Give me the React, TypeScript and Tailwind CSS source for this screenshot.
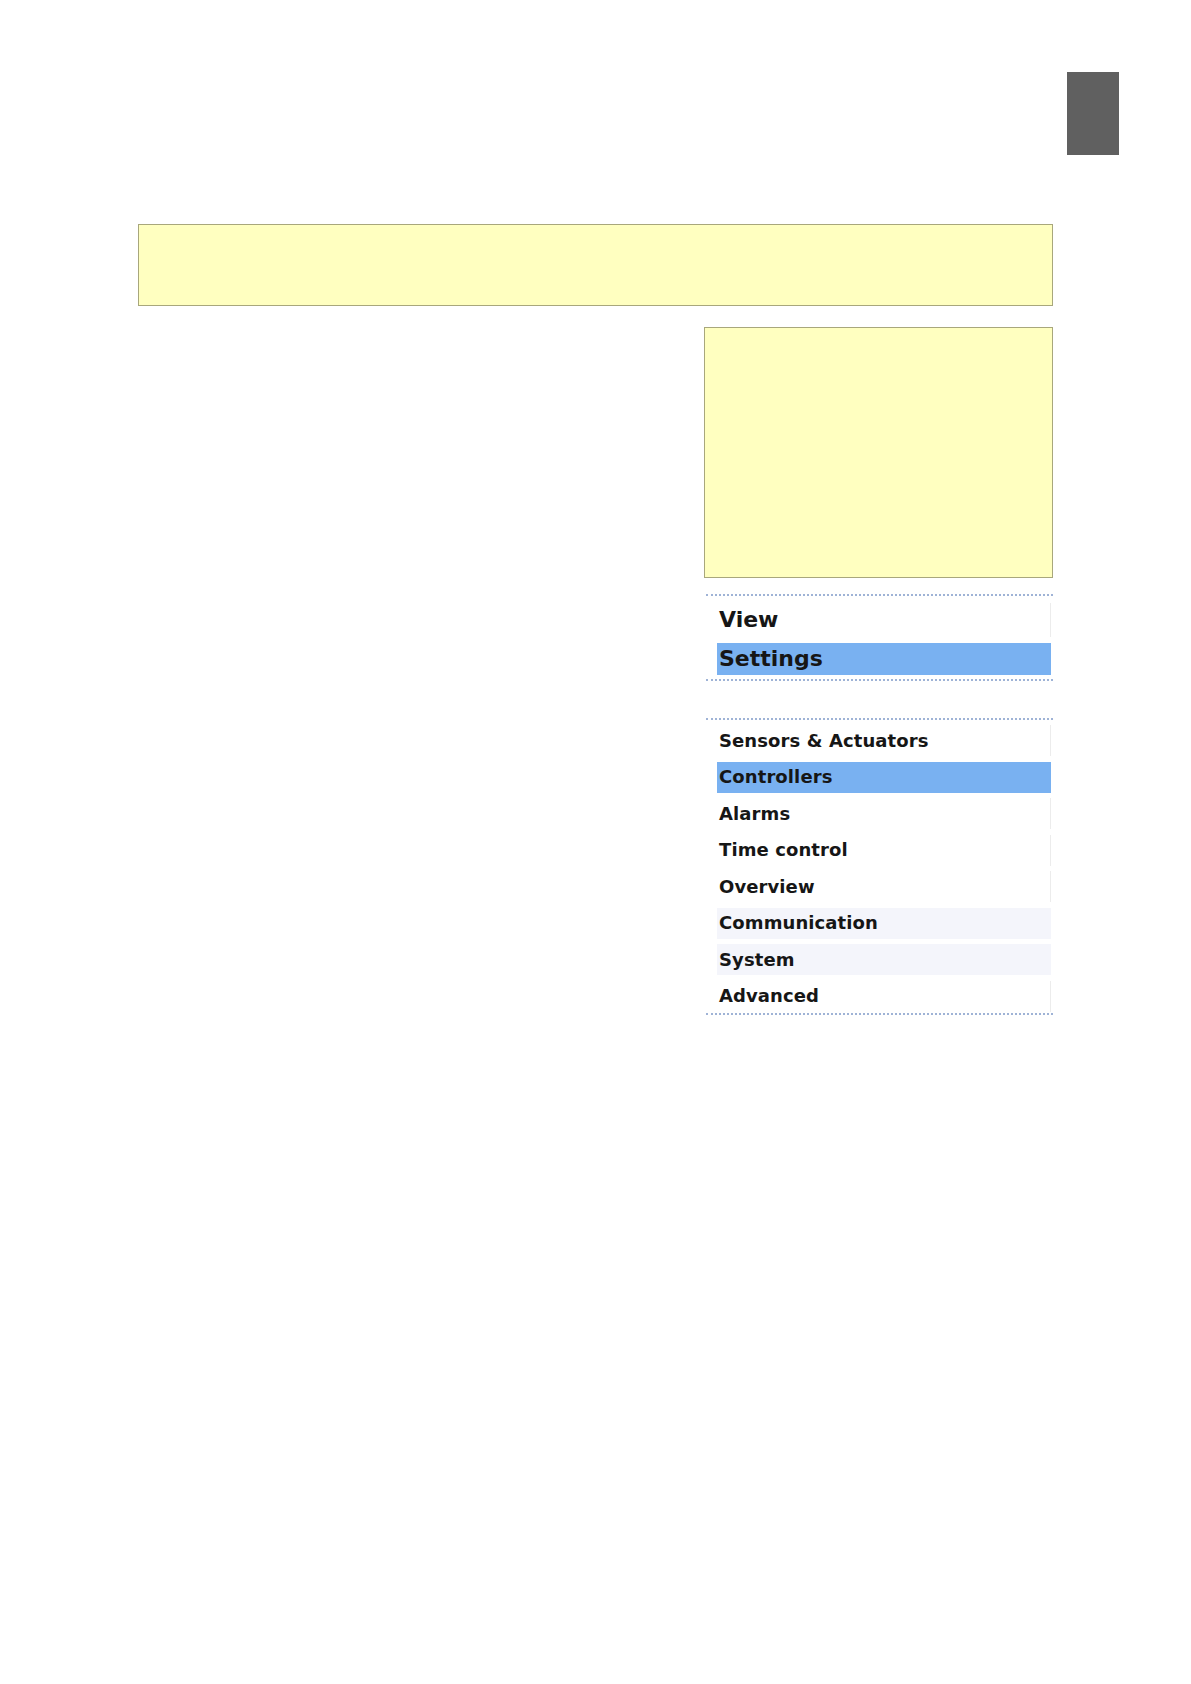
import React from 'react'

type Row = { label: string; tone: 'plain' | 'active' | 'soft' }

const viewRows: Row[] = [
  { label: 'View', tone: 'plain' },
  { label: 'Settings', tone: 'active' },
]

const settingRows: Row[] = [
  { label: 'Sensors & Actuators', tone: 'plain' },
  { label: 'Controllers', tone: 'active' },
  { label: 'Alarms', tone: 'plain' },
  { label: 'Time control', tone: 'plain' },
  { label: 'Overview', tone: 'plain' },
  { label: 'Communication', tone: 'soft' },
  { label: 'System', tone: 'soft' },
  { label: 'Advanced', tone: 'plain' },
]

function toneClass(tone: Row['tone']) {
  if (tone === 'active') return 'bg-[#79b1f1]'
  if (tone === 'soft') return 'bg-[#f4f5fb]'
  return 'bg-white border-r border-[#ececec]'
}

export default function App() {
  return (
    <div className="w-[1191px] h-[1684px] bg-white font-['DejaVu_Sans',sans-serif] text-[#161616]">
      {/* page tab */}
      <div className="flex justify-end pt-[72px] pr-[72px]">
        <div className="w-[52px] h-[83px] bg-[#606060]" />
      </div>

      {/* top note */}
      <div className="ml-[138px] mt-[69px] w-[915px] h-[82px] bg-[#ffffc0] border border-[#a8a77c]" />

      {/* right column */}
      <div className="ml-[704px] mt-[21px] w-[349px]">
        <div className="h-[251px] bg-[#ffffc0] border border-[#a8a77c]" />

        {/* view menu */}
        <div className="ml-[2px] mt-[16px] border-t-2 border-b-2 border-dotted border-[#9fb3d6] pt-[7px] pb-[4px] pl-[11px] pr-[2px] flex flex-col gap-[5px]">
          {viewRows.map((r) => (
            <div
              key={r.label}
              className={`flex items-center pl-[2px] text-[22px] font-bold leading-none ${r.tone === 'active' ? 'h-[32px] mt-[1px]' : 'h-[34px]'} ${toneClass(r.tone)}`}
            >
              {r.label}
            </div>
          ))}
        </div>

        {/* settings menu */}
        <div className="ml-[2px] mt-[37px] border-t-2 border-b-2 border-dotted border-[#9fb3d6] pt-[5px] pb-[1px] pl-[11px] pr-[2px] flex flex-col gap-[5.5px]">
          {settingRows.map((r) => (
            <div
              key={r.label}
              className={`h-[31px] flex items-center pl-[2px] text-[18px] font-bold leading-none tracking-[0.1px] ${toneClass(r.tone)}`}
            >
              {r.label}
            </div>
          ))}
        </div>
      </div>
    </div>
  )
}
